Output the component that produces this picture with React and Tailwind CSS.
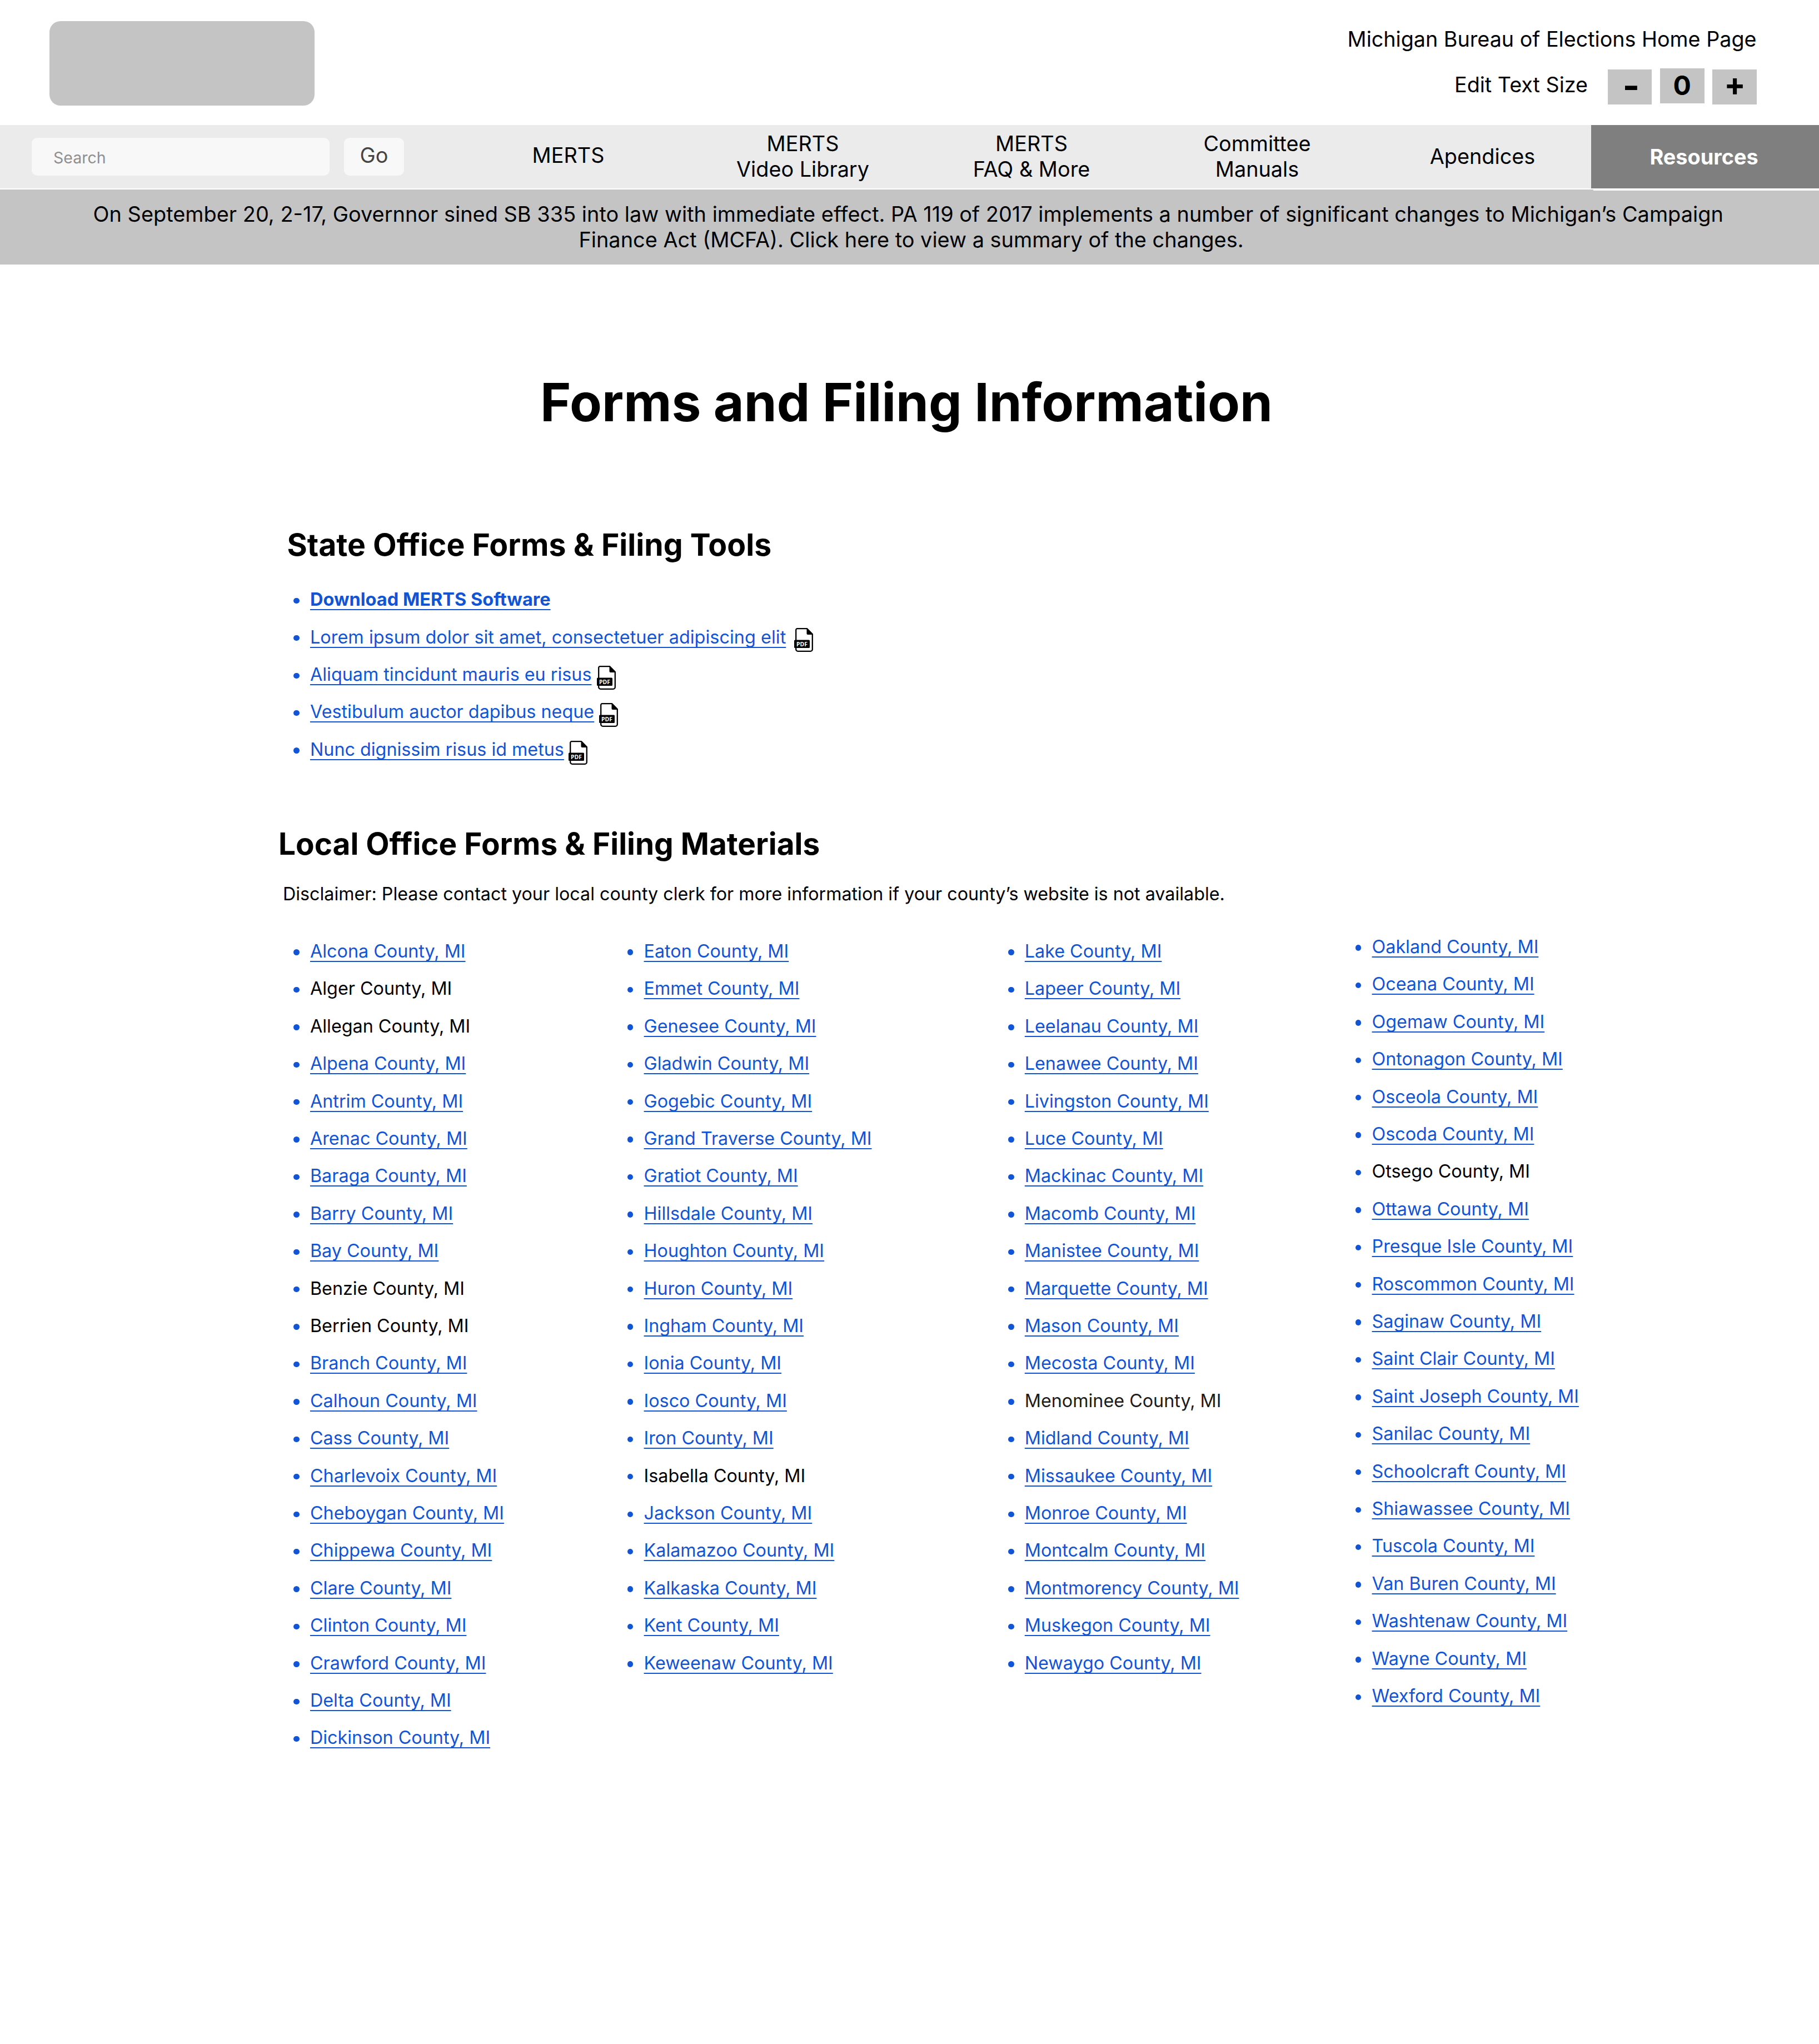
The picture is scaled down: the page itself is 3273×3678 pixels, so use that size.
const NAV_ITEMS = [
  { label: "MERTS", box: "w-[413px] pb-[6px]" },
  { label: "MERTS\nVideo Library", box: "w-[431px] pb-[2px]" },
  { label: "MERTS\nFAQ & More", box: "w-[392px] pb-[2px]" },
  { label: "Committee\nManuals", box: "w-[420px] pb-[2px]" },
  { label: "Apendices", box: "w-[391px] pb-[2px]" },
];

const STATE_LINKS = [
  { label: "Download MERTS Software", bold: true, size: "text-[32.5px]" },
  { label: "Lorem ipsum dolor sit amet, consectetuer adipiscing elit", gap: "ml-[15px]", size: "text-[32.45px]" },
  { label: "Aliquam tincidunt mauris eu risus", gap: "ml-[10px]", size: "text-[32.3px]" },
  { label: "Vestibulum auctor dapibus neque", gap: "ml-[9px]", size: "text-[32.35px]" },
  { label: "Nunc dignissim risus id metus", gap: "ml-[8px]", size: "text-[32.3px]" },
];

const UNLINKED = new Set(["Alger", "Allegan", "Benzie", "Berrien", "Isabella", "Otsego"]);
const MUTED = new Set(["Menominee"]);

const COUNTY_COLUMNS = [
  {
    box: "w-[600.6px] pt-[8px]",
    names: ["Alcona", "Alger", "Allegan", "Alpena", "Antrim", "Arenac", "Baraga", "Barry", "Bay", "Benzie", "Berrien", "Branch", "Calhoun", "Cass", "Charlevoix", "Cheboygan", "Chippewa", "Clare", "Clinton", "Crawford", "Delta", "Dickinson"],
  },
  {
    box: "w-[685.2px] pt-[8px]",
    names: ["Eaton", "Emmet", "Genesee", "Gladwin", "Gogebic", "Grand Traverse", "Gratiot", "Hillsdale", "Houghton", "Huron", "Ingham", "Ionia", "Iosco", "Iron", "Isabella", "Jackson", "Kalamazoo", "Kalkaska", "Kent", "Keweenaw"],
  },
  {
    box: "w-[624.8px] pt-[8px]",
    names: ["Lake", "Lapeer", "Leelanau", "Lenawee", "Livingston", "Luce", "Mackinac", "Macomb", "Manistee", "Marquette", "Mason", "Mecosta", "Menominee", "Midland", "Missaukee", "Monroe", "Montcalm", "Montmorency", "Muskegon", "Newaygo"],
  },
  {
    box: "w-[600px]",
    names: ["Oakland", "Oceana", "Ogemaw", "Ontonagon", "Osceola", "Oscoda", "Otsego", "Ottawa", "Presque Isle", "Roscommon", "Saginaw", "Saint Clair", "Saint Joseph", "Sanilac", "Schoolcraft", "Shiawassee", "Tuscola", "Van Buren", "Washtenaw", "Wayne", "Wexford"],
  },
];

const LINK =
  "text-[#1154d6] underline decoration-[2.4px] underline-offset-[6px] [text-decoration-skip-ink:none]";

function PdfIcon({ className }) {
  return (
    <svg viewBox="0 0 34 43" className={`mt-[11px] h-[43px] w-[34px] shrink-0 ${className}`} aria-label="PDF">
      <path
        d="M5.6 1.2H23.2L32.8 11V38.4a3.4 3.4 0 0 1-3.4 3.4H6.6a3.4 3.4 0 0 1-3.4-3.4V3.6a2.4 2.4 0 0 1 2.4-2.4Z"
        fill="#fff"
        stroke="#000"
        strokeWidth="2.3"
        strokeLinejoin="round"
      />
      <path d="M22.5 1V10a2 2 0 0 0 2 2H33.5Z" fill="#000" />
      <rect x="0" y="21.5" width="28" height="14.6" rx="1.5" fill="#000" />
      <text x="14" y="32.5" textAnchor="middle" fill="#fff" fontSize="10.4" fontWeight="700" fontFamily="'Open Sans', sans-serif">
        PDF
      </text>
    </svg>
  );
}

function Row({ children, size = "text-[32.3px]" }) {
  return (
    <li className={`flex h-[67.42px] items-center whitespace-nowrap leading-[67.4px] ${size}`}>
      <span className="mt-[4px] mr-[19.2px] size-[10.4px] shrink-0 rounded-full bg-[#1154d6]" />
      {children}
    </li>
  );
}

function County({ name }) {
  const text = `${name} County, MI`;
  if (MUTED.has(name)) return <span className="text-[#1b1b1b]">{text}</span>;
  if (UNLINKED.has(name)) return <span>{text}</span>;
  return <a className={LINK}>{text}</a>;
}

function SizeButton({ children, className }) {
  return (
    <button className={`flex h-[62.5px] w-[79.7px] items-center justify-center bg-[#c4c4c4] font-bold ${className}`}>
      {children}
    </button>
  );
}

export default function App() {
  return (
    <div className="h-[3678px] w-[3273px] overflow-hidden bg-white font-['Inter',sans-serif] text-black">
      <header className="flex h-[225px] items-start justify-between pl-[89px]">
        <div className="mt-[38px] h-[152px] w-[477px] rounded-[20px] bg-[#c4c4c4]" />
        <div className="flex flex-col items-end pr-[112px] pt-[47px] text-[37.7px] leading-[46px]">
          <a className="mr-[0.5px]">Michigan Bureau of Elections Home Page</a>
          <div className="mt-[30px] flex items-start">
            <span className="mt-[5.5px] mr-[35.5px]">Edit Text Size</span>
            <SizeButton className="mt-[2px] pb-[5px] pl-[5px] text-[66px]">-</SizeButton>
            <SizeButton className="ml-[14.7px] pb-px text-5xl">0</SizeButton>
            <SizeButton className="mt-[2px] ml-[14.7px] pb-[9px] pl-px text-[57px]">+</SizeButton>
          </div>
        </div>
      </header>

      <nav className="flex h-[114px] items-stretch bg-[#ebebeb] text-[37.8px] leading-[46px]">
        <div className="flex w-[816px] items-center pl-[57px]">
          <div className="flex h-[68px] w-[536px] items-center rounded-[10px] bg-[#f8f8f8] pl-[39px] pt-[4px] text-[28.5px] text-[#8f8f8f]">
            Search
          </div>
          <button className="ml-[26px] flex h-[68px] w-[108px] items-center justify-center rounded-[10px] bg-[#f8f8f8] pb-[7px] text-[#444444]">
            Go
          </button>
        </div>
        {NAV_ITEMS.map((item) => (
          <a key={item.label} className={`flex items-center justify-center whitespace-pre text-center ${item.box}`}>
            {item.label}
          </a>
        ))}
        <a className="flex flex-1 items-center justify-center bg-[#7f7f7f] pr-[4px] font-bold text-white">Resources</a>
      </nav>

      <div className="relative mt-[2px] h-[134.5px] bg-[#c4c4c4] pt-[20.5px] pl-[6px] text-center text-[37.92px] leading-[46px] whitespace-pre">
        {"On September 20, 2-17, Governnor sined SB 335 into law with immediate effect. PA 119 of 2017 implements a number of significant changes to Michigan’s Campaign \nFinance Act (MCFA). Click here to view a summary of the changes."}
        <div className="absolute top-0 right-0 h-[2px] w-[406px] bg-[#fafafa]" />
      </div>

      <main>
        <h1 className="mt-[190.5px] pr-[11px] text-center text-[94.6px] leading-[116px] font-bold">
          Forms and Filing Information
        </h1>

        <section className="mt-[163.8px]">
          <h2 className="pl-[516.5px] text-[55.3px] leading-[68px] font-bold">State Office Forms &amp; Filing Tools</h2>
          <ul className="mt-[31.4px] pl-[528.4px]">
            {STATE_LINKS.map((link) => (
              <Row key={link.label} size={link.size}>
                <a className={`${LINK} ${link.bold ? "font-bold" : ""}`}>{link.label}</a>
                {link.gap && <PdfIcon className={link.gap} />}
              </Row>
            ))}
          </ul>
        </section>

        <section className="mt-[101.5px]">
          <h2 className="pl-[501px] text-[54.9px] leading-[68px] font-bold">Local Office Forms &amp; Filing Materials</h2>
          <p className="mt-[37.4px] pl-[509px] text-[32.25px] leading-[40px]">
            Disclaimer: Please contact your local county clerk for more information if your county’s website is not
            available.
          </p>
          <div className="mt-[40.8px] flex items-start pl-[528.4px]">
            {COUNTY_COLUMNS.map((column) => (
              <ul key={column.names[0]} className={column.box}>
                {column.names.map((name) => (
                  <Row key={name}>
                    <County name={name} />
                  </Row>
                ))}
              </ul>
            ))}
          </div>
        </section>
      </main>
    </div>
  );
}
